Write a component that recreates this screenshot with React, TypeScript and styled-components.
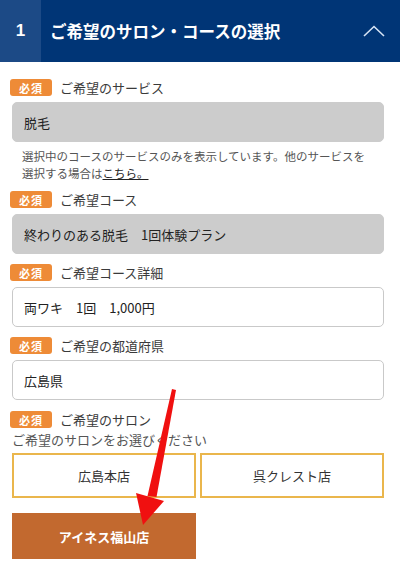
import React from 'react';
import styled, { createGlobalStyle } from 'styled-components';

const GlobalStyle = createGlobalStyle`
	html, body {
		margin: 0;
		padding: 0;
		background: #ffffff;
	}
	body {
		width: 400px;
		font-family: "Noto Sans CJK JP", "Liberation Sans", sans-serif;
		color: #333333;
	}
`

const Page = styled.div`
	position: relative;
	width: 400px;
	height: 570px;
	overflow: hidden;
	background: #ffffff;
`

const Header = styled.div`
	display: flex;
	align-items: center;
	height: 62px;
	background: #003576;
	color: #ffffff;
`

const StepNumber = styled.div`
	display: flex;
	align-items: center;
	justify-content: center;
	width: 41px;
	height: 100%;
	background: #1c4a86;
	font-family: "Liberation Sans", sans-serif;
	font-weight: bold;
	font-size: 17px;
`

const Title = styled.h2`
	flex: 1;
	margin: 0;
	padding-left: 9px;
	font-size: 16.5px;
	font-weight: bold;
	letter-spacing: 0;
`

const Chevron = styled.svg`
	width: 22px;
	height: 12px;
	margin-right: 15px;
`

const Body = styled.div`
	padding: 17px 16px 0 12px;
`

const Field = styled.div<{ $gap?: number }>`
	margin-bottom: ${(p) => p.$gap ?? 10}px;
`

const FieldHead = styled.div`
	display: flex;
	align-items: center;
	height: 17px;
`

const Badge = styled.span`
	display: inline-flex;
	align-items: center;
	justify-content: center;
	width: 42px;
	height: 17px;
	margin-left: -2px;
	border-radius: 3px;
	background: #ee8b37;
	color: #ffffff;
	font-size: 11px;
	font-weight: bold;
	letter-spacing: 1px;
`

const Label = styled.span`
	margin-left: 8px;
	font-size: 13px;
	color: #3a3a3a;
`

const ValueBox = styled.div<{ $readonly?: boolean }>`
	display: flex;
	align-items: center;
	box-sizing: border-box;
	height: 40px;
	margin-top: 6px;
	padding: 0 11px;
	border-radius: 5px;
	border: 1px solid ${(p) => (p.$readonly ? '#cccccc' : '#c9c9c9')};
	background: ${(p) => (p.$readonly ? '#cccccc' : '#ffffff')};
	font-size: 13px;
	color: #222222;
`

const Note = styled.p`
	margin: 6px 0 0 10px;
	font-size: 11.5px;
	line-height: 17px;
	color: #555555;
`

const NoteLink = styled.span`
	color: #222222;
	text-decoration: underline;
`

const Hint = styled.div`
	margin-top: 3px;
	font-size: 13px;
	line-height: 17px;
	color: #555555;
`

const SalonGrid = styled.div`
	display: grid;
	grid-template-columns: 1fr 1fr;
	column-gap: 4px;
	row-gap: 15px;
	margin-top: 5px;
`

const SalonButton = styled.div<{ $selected?: boolean }>`
	display: flex;
	align-items: center;
	justify-content: center;
	box-sizing: border-box;
	height: ${(p) => (p.$selected ? 46 : 45)}px;
	border: 2px solid ${(p) => (p.$selected ? '#c2692f' : '#eab64c')};
	background: ${(p) => (p.$selected ? '#c2692f' : '#ffffff')};
	color: ${(p) => (p.$selected ? '#ffffff' : '#333333')};
	font-size: 13px;
	font-weight: ${(p) => (p.$selected ? 'bold' : 'normal')};
`

const ArrowLayer = styled.svg`
	position: absolute;
	left: 0;
	top: 0;
	width: 400px;
	height: 570px;
	pointer-events: none;
`

const App: React.FC = () => {
	return (
		<Page>
			<GlobalStyle />
			<Header>
				<StepNumber>1</StepNumber>
				<Title>ご希望のサロン・コースの選択</Title>
				<Chevron viewBox="0 0 22 12">
					<polyline points="1,11 11,1.5 21,11" fill="none" stroke="#d6e4f5" strokeWidth="1.6" />
				</Chevron>
			</Header>

			<Body>
				<Field $gap={9}>
					<FieldHead>
						<Badge>必須</Badge>
						<Label>ご希望のサービス</Label>
					</FieldHead>
					<ValueBox $readonly>脱毛</ValueBox>
					<Note>
						選択中のコースのサービスのみを表示しています。他のサービスを<br />
						選択する場合は<NoteLink>こちら。</NoteLink>
					</Note>
				</Field>

				<Field>
					<FieldHead>
						<Badge>必須</Badge>
						<Label>ご希望コース</Label>
					</FieldHead>
					<ValueBox $readonly>終わりのある脱毛　1回体験プラン</ValueBox>
				</Field>

				<Field>
					<FieldHead>
						<Badge>必須</Badge>
						<Label>ご希望コース詳細</Label>
					</FieldHead>
					<ValueBox>両ワキ　1回　1,000円</ValueBox>
				</Field>

				<Field $gap={11}>
					<FieldHead>
						<Badge>必須</Badge>
						<Label>ご希望の都道府県</Label>
					</FieldHead>
					<ValueBox>広島県</ValueBox>
				</Field>

				<Field>
					<FieldHead>
						<Badge>必須</Badge>
						<Label>ご希望のサロン</Label>
					</FieldHead>
					<Hint>ご希望のサロンをお選びください</Hint>
					<SalonGrid>
						<SalonButton>広島本店</SalonButton>
						<SalonButton>呉クレスト店</SalonButton>
						<SalonButton $selected>アイネス福山店</SalonButton>
					</SalonGrid>
				</Field>
			</Body>

			{/* red pointer arrow drawn over the form */}
			<ArrowLayer viewBox="0 0 400 570">
				<polygon points="172,389 176,390 156.5,497 147.5,496" fill="#f01010" />
				<polygon points="136,493 164,501 143,525" fill="#f01010" />
			</ArrowLayer>
		</Page>
	)
}

export default App
